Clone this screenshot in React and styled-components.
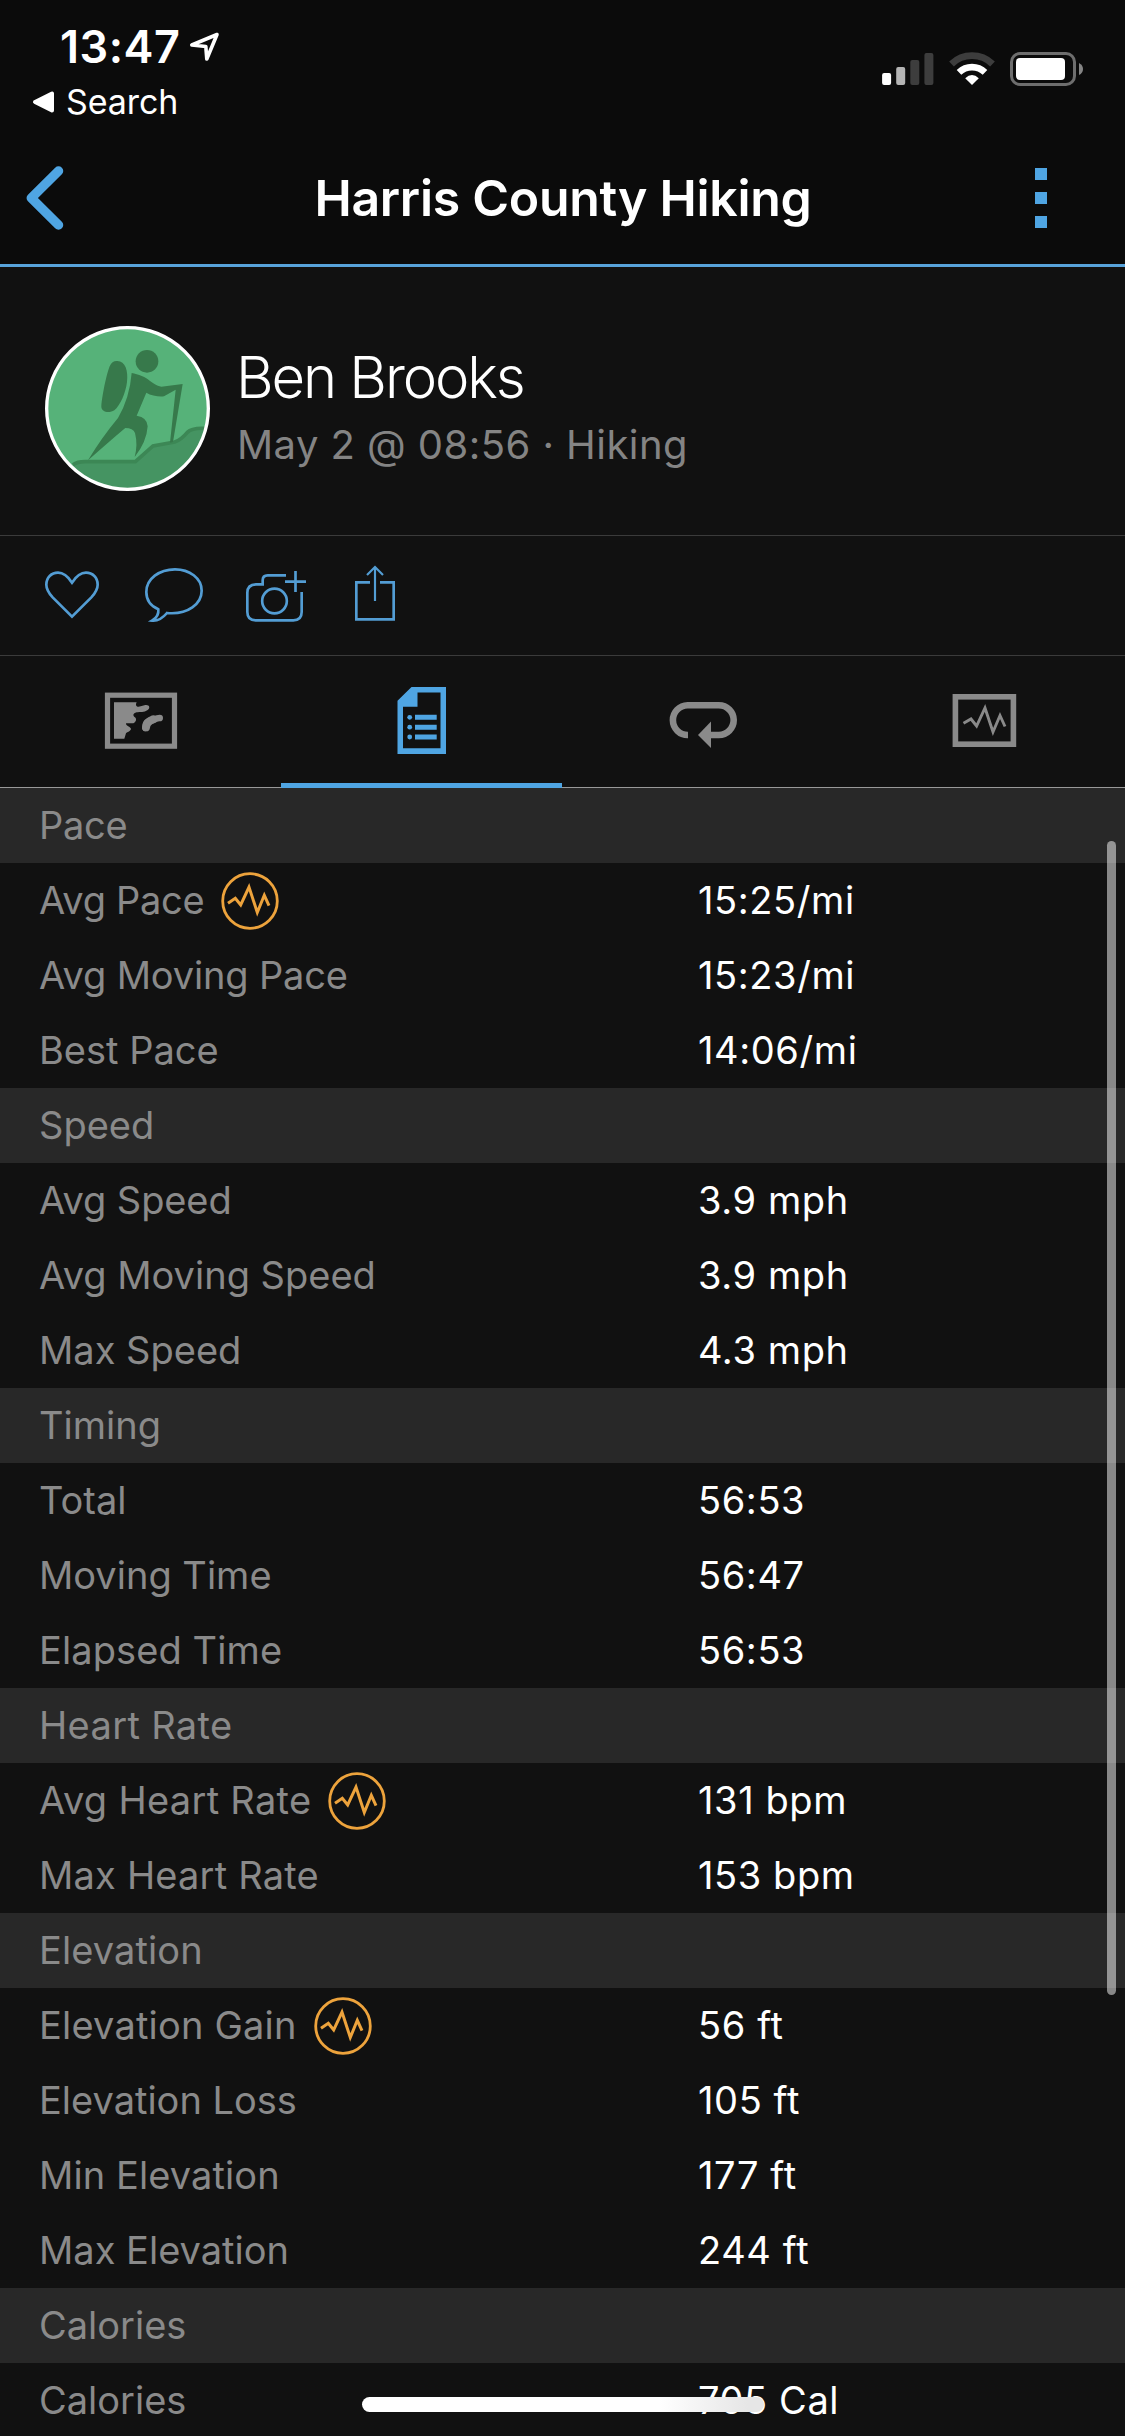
import React from "react";
import styled, { createGlobalStyle } from "styled-components";

const BLUE = "#4fa5e3";
const GRAY = "#8a8a8a";

const GlobalStyle = createGlobalStyle`
  * { box-sizing: border-box; }
  body {
    margin: 0;
    background: #111111;
    font-family: Inter, "Liberation Sans", sans-serif;
  }
  svg { display: block; flex: none; }
`;

const Screen = styled.div`
  position: relative;
  width: 1125px;
  height: 2436px;
  overflow: hidden;
  background: #111111;
  color: #ffffff;
`;

const Header = styled.header`
  height: 267px;
  background: #0b0b0b;
  border-bottom: 3px solid #58a3da;
`;

const StatusBar = styled.div`
  display: flex;
  justify-content: space-between;
  height: 132px;
  padding: 20px 40px 0 32px;
`;

const StatusLeft = styled.div`
  display: flex;
  flex-direction: column;
  gap: 8px;
`;

const Clock = styled.div`
  display: flex;
  align-items: center;
  gap: 8px;
  padding-left: 28px;
  font-size: 45px;
  font-weight: 600;
  letter-spacing: 0.5px;
  line-height: 54px;
`;

const BackToApp = styled.div`
  display: flex;
  align-items: center;
  gap: 12px;
  font-size: 34px;
  letter-spacing: -0.1px;
  line-height: 40px;
`;

const StatusRight = styled.div`
  display: flex;
  align-items: flex-start;
  gap: 15px;
  padding-top: 32px;
`;

const NavBar = styled.nav`
  display: grid;
  grid-template-columns: 150px 1fr 150px;
  align-items: center;
  height: 132px;
`;

const BackButton = styled.div`
  padding-left: 26px;
`;

const Title = styled.h1`
  margin: 0;
  padding-left: 1px;
  text-align: center;
  font-size: 50px;
  font-weight: 600;
  letter-spacing: -0.28px;
  line-height: 60px;
`;

const MoreButton = styled.div`
  display: flex;
  flex-direction: column;
  gap: 12px;
  padding-left: 60px;
`;

const MoreDot = styled.span`
  width: 12px;
  height: 12px;
  background: ${BLUE};
`;

const Profile = styled.section`
  display: flex;
  gap: 26px;
  height: 269px;
  padding: 59px 45px 0;
  border-bottom: 1px solid #3b3b3b;
`;

const ProfileText = styled.div`
  display: flex;
  flex-direction: column;
  gap: 14px;
  padding-top: 21px;
`;

const Name = styled.div`
  font-size: 58px;
  font-weight: 300;
  letter-spacing: -2.1px;
  line-height: 60px;
`;

const Subtitle = styled.div`
  padding-left: 1px;
  color: #848484;
  font-size: 40px;
  letter-spacing: 0.45px;
  line-height: 48px;
`;

const Actions = styled.div`
  display: flex;
  gap: 36px;
  height: 120px;
  padding: 24px 40px 0;
  border-bottom: 1px solid #3b3b3b;
  color: ${BLUE};
`;

const Tabs = styled.div`
  display: grid;
  grid-template-columns: repeat(4, 281px);
  height: 132px;
  border-bottom: 1px solid #999999;
`;

const Tab = styled.div`
  display: flex;
  justify-content: center;
  height: 132px;
  padding-top: 20px;
  color: ${(p) => (p.$active ? BLUE : GRAY)};
  border-bottom: ${(p) => (p.$active ? `5px solid ${BLUE}` : "none")};
`;

const SectionHeader = styled.div`
  height: 75px;
  padding-left: 39px;
  background: #282828;
  color: #8a8a8a;
  font-size: 38px;
  letter-spacing: ${(p) => p.$tracking ?? 0}px;
  line-height: 75px;
`;

const Row = styled.div`
  display: grid;
  grid-template-columns: 659px 1fr;
  height: 75px;
  padding-left: 39px;
  font-size: 38px;
  line-height: 75px;
`;

const Label = styled.div`
  display: flex;
  align-items: center;
  gap: 17px;
  color: #8a8a8a;
  letter-spacing: ${(p) => p.$tracking ?? 0}px;
`;

const Value = styled.div`
  letter-spacing: 0.6px;
`;

const ScrollThumb = styled.div`
  position: absolute;
  top: 841px;
  right: 9px;
  width: 9px;
  height: 1154px;
  border-radius: 5px;
  background: rgba(255, 255, 255, 0.5);
`;

const HomeIndicator = styled.div`
  position: absolute;
  left: 362px;
  bottom: 24px;
  width: 402px;
  height: 15px;
  border-radius: 8px;
  background: linear-gradient(90deg, #ffffff 74%, #e6e6e6 96%);
`;

const LocationArrow = () => (
  <svg width="32" height="34" viewBox="188 30 32 34">
    <path d="M217 34.5L191.8 45L205.8 46.5L206.8 59Z" fill="none" stroke="#fff" strokeWidth="3.6" strokeLinejoin="round" />
  </svg>
);

const BackTriangle = () => (
  <svg width="22" height="24" viewBox="0 0 22 24">
    <path d="M3 12L20 3.5V20.5Z" fill="#fff" stroke="#fff" strokeWidth="4" strokeLinejoin="round" />
  </svg>
);

const Signal = () => (
  <svg width="52" height="34" viewBox="881.5 52 52 34">
    <rect x="881.6" y="73" width="9" height="12" rx="2" fill="#fff" />
    <rect x="895.7" y="67" width="9" height="18" rx="2" fill="#b4b4b4" />
    <rect x="909.8" y="60" width="9" height="25" rx="2" fill="#3d3d3d" />
    <rect x="923.9" y="53" width="9" height="32" rx="2" fill="#3d3d3d" />
  </svg>
);

const Wifi = () => (
  <svg width="46" height="34" viewBox="0 0 46 34">
    <path d="M2.5 12A29.5 29.5 0 0 1 43.5 12" fill="none" stroke="#3d3d3d" strokeWidth="6.8" />
    <path d="M10 20.3A18.8 18.8 0 0 1 36 20.3" fill="none" stroke="#fff" strokeWidth="6.6" />
    <path d="M23 33L16.2 26.2Q23 19.6 29.8 26.2Z" fill="#fff" />
  </svg>
);

const Battery = () => (
  <svg width="75" height="34" viewBox="0 0 75 34">
    <rect x="1.5" y="1.5" width="63" height="31" rx="8.5" fill="none" stroke="#6e6e6e" strokeWidth="3" />
    <rect x="6" y="6" width="49" height="22" rx="4" fill="#fff" />
    <path d="M69 11Q73 13 73 17T69 23Z" fill="#858585" />
  </svg>
);

const Chevron = () => (
  <svg width="38" height="64" viewBox="0 0 38 64">
    <path d="M32.5 5L5.3 32L32.5 59" fill="none" stroke={BLUE} strokeWidth="9.5" strokeLinecap="round" strokeLinejoin="round" />
  </svg>
);

const Avatar = () => (
  <svg width="165" height="165" viewBox="21 24 495 495">
    <defs>
      <clipPath id="disc">
        <circle cx="268.5" cy="271.5" r="243" />
      </clipPath>
    </defs>
    <circle cx="268.5" cy="271.5" r="243" fill="#56b279" />
    <g clipPath="url(#disc)">
      <path d="M95 445Q120 428 150 431H290L345 384L410 372Q430 365 452 340Q470 325 520 332V530H95Z" fill="#459462" />
      <path d="M105 440Q120 429 150 431H292L345 384L410 372Q430 365 448 343Q462 329 500 331" fill="none" stroke="#3c8755" strokeWidth="11" />
      <g fill="#37794b">
        <circle cx="327" cy="130" r="34" />
        <path d="M238 129C262 130 271 158 267 192C263 225 247 262 229 277C214 287 189 283 190 265C192 235 205 170 215 145C220 133 228 128 238 129Z" />
        <path d="M281 165C300 168 325 178 335 188C345 195 355 203 370 206L434 198L405 372L396 374L413 215L378 235C362 237 340 233 325 224L296 293Q328 298 329 325Q326 372 290 417Q300 380 291 345Q285 330 262 330Q235 352 150 427Q190 360 240 300Q275 240 281 165Z" />
      </g>
    </g>
    <circle cx="268.5" cy="271.5" r="242.5" fill="none" stroke="#fff" strokeWidth="10" />
  </svg>
);

const ActionIcon = ({ x, width, children }) => (
  <svg width={width} height="72" viewBox={`${x * 3} 60 ${width * 3} 216`} fill="none" stroke="#539dd4" strokeWidth="8">
    {children}
  </svg>
);

const HeartIcon = () => (
  <ActionIcon x={40} width={64}>
    <path d="M216 128C203 108 192 98 174 98C154 98 139 113 139 134C139 150 147 160 158 172L216 230L274 172C285 160 293 150 293 134C293 113 278 98 258 98C240 98 229 108 216 128Z" />
  </ActionIcon>
);

const CommentIcon = () => (
  <ActionIcon x={140} width={68}>
    <path d="M501 219C565 225 605 190 605 152C605 114 568 88 525 88C478 88 439 116 439 156C439 180 452 198 475 208C477 225 468 235 456 242C475 244 490 232 501 219Z" />
  </ActionIcon>
);

const CameraIcon = () => (
  <ActionIcon x={244} width={68}>
    <path d="M858 106H803Q788 106 788 121V133H768Q742 134 742 158V216Q742 241 767 241H880Q905 241 905 216V156" />
    <circle cx="823.5" cy="183" r="37" />
    <path d="M855 125H918M886.5 93V156" />
  </ActionIcon>
);

const ShareIcon = () => (
  <ActionIcon x={348} width={52}>
    <path d="M1110 127H1069V238H1181V127H1140" />
    <path d="M1125 183V82M1101 105L1125 81L1149 105" strokeWidth="6.5" />
  </ActionIcon>
);

const TabIcon = ({ x, children }) => (
  <svg width="91" height="91" viewBox={`${x} 676 91 91`} fill="none" stroke="currentColor">
    {children}
  </svg>
);

const MapIcon = () => (
  <TabIcon x={95}>
    <rect x="107.5" y="695.2" width="67" height="51" strokeWidth="5.2" />
    <g transform="translate(90 680) scale(.33333)">
      <path
        d="M72 67H140C134 78 142 83 152 79L166 75C178 73 182 84 173 90C162 98 150 95 140 97C128 100 128 108 135 112C141 118 138 126 130 130H108C108 140 118 137 123 146C122 154 112 155 108 160L103 176H72Z"
        fill="currentColor"
        stroke="none"
      />
      <path d="M167 144C165 128 174 122 184 121C193 121 196 114 209 114" strokeWidth="20" strokeLinecap="round" />
      <path d="M168 142C170 130 175 124 190 118" strokeWidth="24" strokeLinecap="round" />
    </g>
  </TabIcon>
);

const DetailsIcon = () => (
  <TabIcon x={376}>
    <path
      d="M411.5 687H446V754H397.5V700.7ZM417.5 692.5V706.7H403V748.2H440.5V692.5Z"
      fill="currentColor"
      stroke="none"
      fillRule="evenodd"
    />
    <path d="M415 717.3H436.7M415 727.2H436.7M415 737H436.7" strokeWidth="5" />
    <g fill="currentColor" stroke="none">
      <circle cx="409.7" cy="717.3" r="2.4" />
      <circle cx="409.7" cy="727.2" r="2.4" />
      <circle cx="409.7" cy="737" r="2.4" />
    </g>
  </TabIcon>
);

const LapsIcon = () => (
  <TabIcon x={657}>
    <path d="M688 735A14.9 14.9 0 0 1 687.6 705.2H718.8A14.9 14.9 0 0 1 718.8 735H709" strokeWidth="6.6" />
    <path d="M698 735L711 721.5V748Z" fill="currentColor" stroke="none" />
  </TabIcon>
);

const GraphIcon = () => (
  <TabIcon x={938}>
    <rect x="955.4" y="696.8" width="58" height="47.4" strokeWidth="5.6" />
    <path d="M963.5 723.3L971 719L976.6 726L985 708L993 732L1000 715.5L1005 726.5" strokeWidth="2.9" />
  </TabIcon>
);

const PulseBadge = () => (
  <svg width="58" height="58" viewBox="-29 -29 58 58" fill="none" stroke="#eda33c">
    <circle r="27.3" strokeWidth="2.8" />
    <path d="M-22 2.2L-14.7 -2.8L-9.3 4L-1 -14L7.3 11.5L14.3 -5.7L19 4.7" strokeWidth="3" />
  </svg>
);

const SECTIONS = [
  {
    title: "Pace",
    tracking: -0.3,
    rows: [
      { label: "Avg Pace", value: "15:25/mi", badge: true, tracking: -0.3 },
      { label: "Avg Moving Pace", value: "15:23/mi", tracking: -0.15 },
      { label: "Best Pace", value: "14:06/mi" },
    ],
  },
  {
    title: "Speed",
    rows: [
      { label: "Avg Speed", value: "3.9 mph", tracking: -0.1 },
      { label: "Avg Moving Speed", value: "3.9 mph" },
      { label: "Max Speed", value: "4.3 mph" },
    ],
  },
  {
    title: "Timing",
    rows: [
      { label: "Total", value: "56:53" },
      { label: "Moving Time", value: "56:47" },
      { label: "Elapsed Time", value: "56:53", tracking: 0.1 },
    ],
  },
  {
    title: "Heart Rate",
    tracking: 0.35,
    rows: [
      { label: "Avg Heart Rate", value: "131 bpm", badge: true, tracking: 0.3 },
      { label: "Max Heart Rate", value: "153 bpm", tracking: 0.2 },
    ],
  },
  {
    title: "Elevation",
    tracking: 0.1,
    rows: [
      { label: "Elevation Gain", value: "56 ft", badge: true, tracking: 0.2 },
      { label: "Elevation Loss", value: "105 ft" },
      { label: "Min Elevation", value: "177 ft", tracking: 0.1 },
      { label: "Max Elevation", value: "244 ft" },
    ],
  },
  { title: "Calories", rows: [{ label: "Calories", value: "705 Cal" }] },
];

export default function App() {
  return (
    <Screen>
      <GlobalStyle />
      <Header>
        <StatusBar>
          <StatusLeft>
            <Clock>
              13:47
              <LocationArrow />
            </Clock>
            <BackToApp>
              <BackTriangle />
              Search
            </BackToApp>
          </StatusLeft>
          <StatusRight>
            <Signal />
            <Wifi />
            <Battery />
          </StatusRight>
        </StatusBar>
        <NavBar>
          <BackButton>
            <Chevron />
          </BackButton>
          <Title>Harris County Hiking</Title>
          <MoreButton>
            <MoreDot />
            <MoreDot />
            <MoreDot />
          </MoreButton>
        </NavBar>
      </Header>
      <Profile>
        <Avatar />
        <ProfileText>
          <Name>Ben Brooks</Name>
          <Subtitle>May 2 @ 08:56 · Hiking</Subtitle>
        </ProfileText>
      </Profile>
      <Actions>
        <HeartIcon />
        <CommentIcon />
        <CameraIcon />
        <ShareIcon />
      </Actions>
      <Tabs>
        <Tab>
          <MapIcon />
        </Tab>
        <Tab $active>
          <DetailsIcon />
        </Tab>
        <Tab>
          <LapsIcon />
        </Tab>
        <Tab>
          <GraphIcon />
        </Tab>
      </Tabs>
      {SECTIONS.map((section) => (
        <section key={section.title}>
          <SectionHeader $tracking={section.tracking}>{section.title}</SectionHeader>
          {section.rows.map((row) => (
            <Row key={row.label}>
              <Label $tracking={row.tracking}>
                {row.label}
                {row.badge && <PulseBadge />}
              </Label>
              <Value>{row.value}</Value>
            </Row>
          ))}
        </section>
      ))}
      <ScrollThumb />
      <HomeIndicator />
    </Screen>
  );
}
